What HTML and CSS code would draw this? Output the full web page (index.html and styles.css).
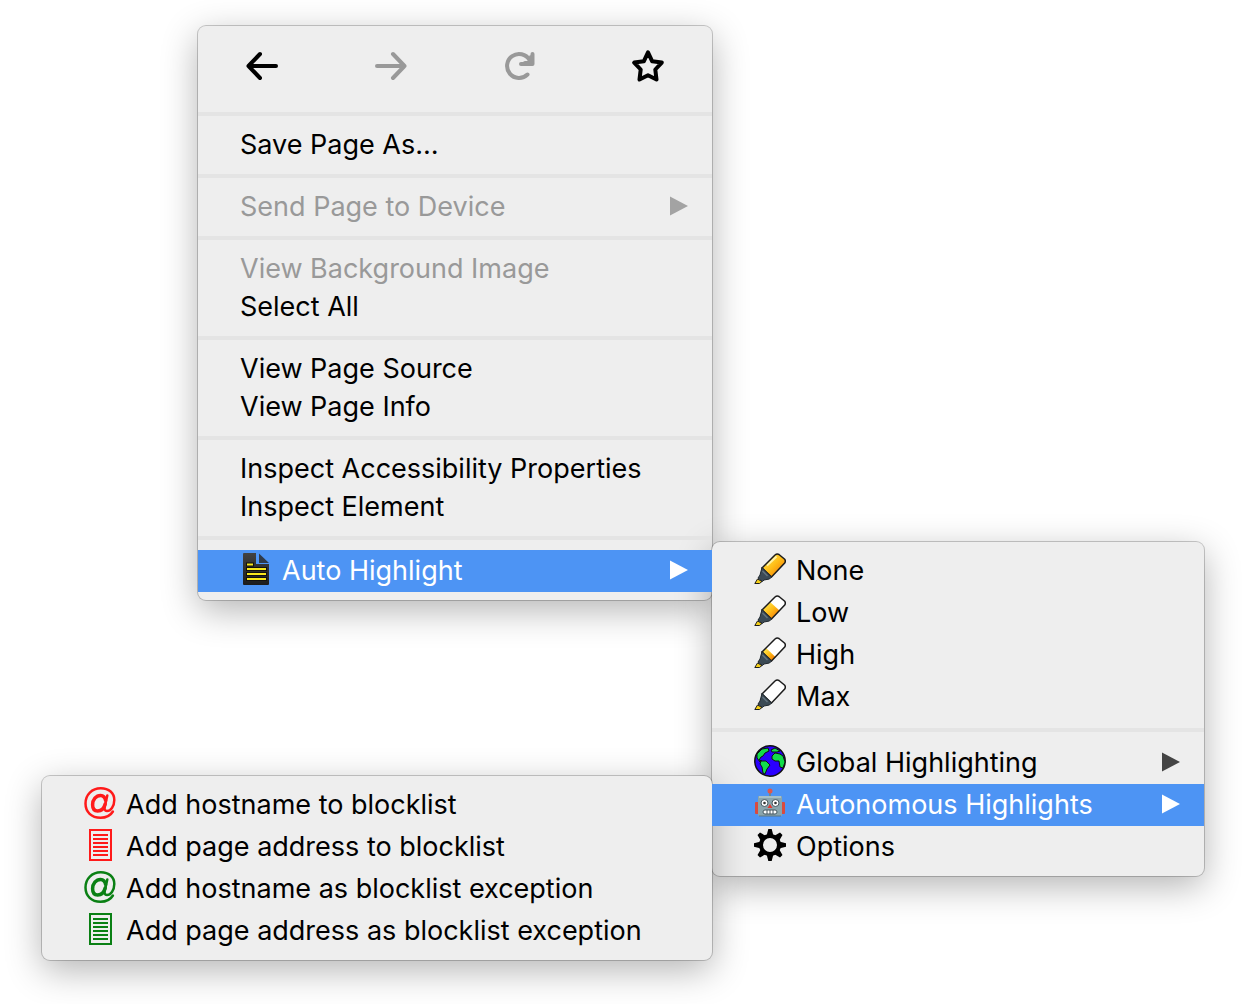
FILE: index.html
```html
<!DOCTYPE html>
<html lang="en">
<head>
  <meta charset="UTF-8">
  <meta name="viewport" content="width=device-width, initial-scale=1.0">
  <title>Auto Highlight</title>
  <link rel="stylesheet" href="styles.css">
</head>
<body>
  <!-- shared icons -->
  <svg class="defs" width="0" height="0" aria-hidden="true">
    <defs>
      <linearGradient id="ink" x1="0" y1="0" x2="1" y2="1">
        <stop offset="0.2" stop-color="#ffdf45"/>
        <stop offset="0.5" stop-color="#ffbd16"/>
        <stop offset="0.8" stop-color="#f58a0b"/>
      </linearGradient>
      <linearGradient id="paper" x1="0" y1="0" x2="0" y2="1">
        <stop offset="0" stop-color="#424242"/>
        <stop offset="1" stop-color="#1c1c1c"/>
      </linearGradient>
      <symbol id="arrow" viewBox="0 0 18 20">
        <path d="M0 0.5 18 10 0 19.5z" fill="currentColor"/>
      </symbol>
      <symbol id="barrel" viewBox="0 0 32 32">
        <path d="M8 15 21 2Q23 0.3 25 1.5L30.7 6.3Q32 8 30.7 10L17.5 24z"/>
      </symbol>
      <symbol id="nib" viewBox="0 0 32 32">
        <path d="M8 15 21 2Q23 0.3 25 1.5L30.7 6.3Q32 8 30.7 10L17.5 24z" fill="none" stroke="#1c1c1c" stroke-width="1.5"/>
        <path d="M8 14.500 17.5 24 15.500 26 10 27 8.500 28.500 4 25 6 22z" fill="#3b4a55" stroke="#20282e"/>
        <path d="M8.500 18 13.500 23" stroke="#63747f" stroke-width="1.5"/>
        <path d="M3.500 26 8 28.500 5.500 30.500H0.8z" fill="#f5d018" stroke="#1c1c1c"/>
      </symbol>
      <symbol id="at" viewBox="0 0 32 32">
        <g fill="none" stroke="currentColor" stroke-linecap="round">
          <path d="M28.9 24.5C26.5 28.5 22 30.7 16.5 30.7 7.5 30.7 1.5 25 1.5 16.5 1.5 7.5 8 1.3 16.8 1.3 25 1.3 30.3 6 30.3 13 30.3 19.5 26.5 24 23 24 20.6 24 20.2 22.2 20.8 19.5L23.3 8.5" stroke-width="2.5"/>
          <path d="M21.6 13.5C21 10 19.2 8.4 16.6 8.4 12 8.4 8.6 12.8 8.6 17.7 8.6 21.6 10.5 23.9 13.7 23.9 17.4 23.9 20.2 20.8 21.2 17" stroke-width="3.5"/>
        </g>
      </symbol>
      <symbol id="page" viewBox="0 0 32 32">
        <path d="M6 1H27V31H6z" fill="none" stroke="currentColor" stroke-width="2"/>
        <path d="M9 6H24M9 10H24M9 14H24M9 18H24M9 22H24M9 26H24" stroke="currentColor" stroke-width="2"/>
      </symbol>
    </defs>
  </svg>

  <nav class="menu main-menu" aria-label="Context menu">
    <div class="toolbar">
      <button type="button" aria-label="Back">
        <svg width="32" height="32" viewBox="0 0 32 32"><path d="M30 16H2.5M14 4 2.5 16 14 28"/></svg>
      </button>
      <button type="button" aria-label="Forward" disabled>
        <svg width="32" height="32" viewBox="0 0 32 32"><path d="M2 16H29.5M18 4 29.5 16 18 28"/></svg>
      </button>
      <button type="button" aria-label="Reload" disabled>
        <svg width="32" height="32" viewBox="0 0 32 32"><path d="M24.5 24.5A12 12 0 1 1 26.5 10"/><path d="M29.5 4V14H18M28 7V13H22"/></svg>
      </button>
      <button type="button" aria-label="Bookmark">
        <svg width="32" height="32" viewBox="0 0 32 32"><path d="M16 2.3 20.2 11.3 29.8 12.6 23.3 19.5 24.5 29.5 16 25.2 7.5 29.5 8.7 19.5 2.2 12.6 11.8 11.3z"/></svg>
      </button>
    </div>
    <ul class="group">
      <li><button type="button" class="item">Save Page As…</button></li>
    </ul>
    <ul class="group">
      <li>
        <button type="button" class="item" disabled>Send Page to Device
          <svg class="more" width="18" height="20"><use href="#arrow"/></svg>
        </button>
      </li>
    </ul>
    <ul class="group">
      <li><button type="button" class="item" disabled>View Background Image</button></li>
      <li><button type="button" class="item">Select All</button></li>
    </ul>
    <ul class="group">
      <li><button type="button" class="item">View Page Source</button></li>
      <li><button type="button" class="item">View Page Info</button></li>
    </ul>
    <ul class="group">
      <li><button type="button" class="item">Inspect Accessibility Properties</button></li>
      <li><button type="button" class="item">Inspect Element</button></li>
    </ul>
    <ul class="group">
      <li class="parent">
        <button type="button" class="item with-icon active" aria-expanded="true">
          <svg class="icon" width="32" height="32" viewBox="0 0 32 32">
            <path d="M4 0H16V11H29V31Q29 32 28 32H4Q3 32 3 31V1Q3 0 4 0z" fill="url(#paper)"/>
            <path d="M19 0.5 29 10H19z" fill="#2f3a49"/>
            <path d="M6 11.5H14M6 16H27M6 21H27M6 26H27" stroke="#111" stroke-width="4"/>
            <path d="M7 11.5H13M7 16H26M7 21H26M7 26H26" stroke="#f7e71c" stroke-width="2.2"/>
          </svg>
          Auto Highlight
          <svg class="more" width="18" height="20"><use href="#arrow"/></svg>
        </button>

        <div class="menu submenu levels">
          <ul class="group">
            <li>
              <button type="button" class="item with-icon">
                <svg class="icon" width="32" height="32" viewBox="0 0 32 32">
                  <use href="#barrel" fill="url(#ink)"/>
                  <path d="M13 12.5 22.5 3.5" stroke="#fff3a8" stroke-width="2"/>
                  <use href="#nib"/>
                </svg>
                None
              </button>
            </li>
            <li>
              <button type="button" class="item with-icon">
                <svg class="icon" width="32" height="32" viewBox="0 0 32 32">
                  <use href="#barrel" fill="#fff"/>
                  <path d="M8 15 16 7 25.5 15.5 17.5 24z" fill="url(#ink)"/>
                  <use href="#nib"/>
                </svg>
                Low
              </button>
            </li>
            <li>
              <button type="button" class="item with-icon">
                <svg class="icon" width="32" height="32" viewBox="0 0 32 32">
                  <use href="#barrel" fill="#fff"/>
                  <path d="M8 15 12 11 21.5 20 17.5 24z" fill="url(#ink)"/>
                  <use href="#nib"/>
                </svg>
                High
              </button>
            </li>
            <li>
              <button type="button" class="item with-icon">
                <svg class="icon" width="32" height="32" viewBox="0 0 32 32">
                  <use href="#barrel" fill="#fff"/>
                  <use href="#nib"/>
                </svg>
                Max
              </button>
            </li>
          </ul>
          <ul class="group">
            <li>
              <button type="button" class="item with-icon">
                <svg class="icon" width="32" height="32" viewBox="0 0 32 32">
                  <circle cx="16" cy="16" r="15.2" fill="#2a00ff" stroke="#111" stroke-width="1.5"/>
                  <g fill="#12dc4a" stroke="#111" stroke-linejoin="round">
                    <path d="M3 9 8 4 14 3 15 6 11 8 9 11 7 12 5 15 8 16 6 17 3 13z"/>
                    <path d="M17 5 21 3 26 6 23 7 18 7z"/>
                    <path d="M18 11 21 8 26 9 29 11 31 17 29 23 26 22 25 16 21 16 18 14z"/>
                    <path d="M7 16 12 16 16 20 13 24 11 29 9 28 8 22 6 19z"/>
                  </g>
                </svg>
                Global Highlighting
                <svg class="more" width="18" height="20"><use href="#arrow"/></svg>
              </button>
            </li>
            <li class="parent">
              <button type="button" class="item with-icon active" aria-expanded="true">
                <svg class="icon" width="32" height="32" viewBox="0 0 32 32">
                  <path d="M16 3V10" stroke="#6f8790" stroke-width="2"/>
                  <circle cx="16" cy="4" r="2.5" fill="#e2564b"/>
                  <rect x="1" y="15" width="4" height="12" rx="1" fill="#d94b3f"/>
                  <rect x="27" y="15" width="4" height="12" rx="1" fill="#d94b3f"/>
                  <rect x="4" y="9" width="24" height="20" rx="1" fill="#8aa5ad"/>
                  <path d="M5 10H27" stroke="#a8c0c6" stroke-width="2"/>
                  <path d="M5 29H27" stroke="#5f7780"/>
                  <circle cx="10.5" cy="16" r="3.5" fill="#fff" stroke="#455760"/>
                  <circle cx="21.5" cy="16" r="3.5" fill="#fff" stroke="#455760"/>
                  <circle cx="10.5" cy="16" r="1.3" fill="#333"/>
                  <circle cx="21.5" cy="16" r="1.3" fill="#333"/>
                  <path d="M16 17 18.5 21H13.5z" fill="#e8382f"/>
                  <rect x="9" y="23" width="14" height="4" rx="2" fill="#fff" stroke="#455760"/>
                  <path d="M13 23V27M16 23V27M19 23V27" stroke="#455760"/>
                </svg>
                Autonomous Highlights
                <svg class="more" width="18" height="20"><use href="#arrow"/></svg>
              </button>

              <div class="menu submenu blocklist">
                <ul class="group">
                  <li>
                    <button type="button" class="item with-icon">
                      <svg class="icon block" width="32" height="32"><use href="#at"/></svg>
                      Add hostname to blocklist
                    </button>
                  </li>
                  <li>
                    <button type="button" class="item with-icon">
                      <svg class="icon block" width="32" height="32"><use href="#page"/></svg>
                      Add page address to blocklist
                    </button>
                  </li>
                  <li>
                    <button type="button" class="item with-icon">
                      <svg class="icon allow" width="32" height="32"><use href="#at"/></svg>
                      Add hostname as blocklist exception
                    </button>
                  </li>
                  <li>
                    <button type="button" class="item with-icon">
                      <svg class="icon allow" width="32" height="32"><use href="#page"/></svg>
                      Add page address as blocklist exception
                    </button>
                  </li>
                </ul>
              </div>
            </li>
            <li>
              <button type="button" class="item with-icon">
                <svg class="icon" width="32" height="32" viewBox="0 0 32 32">
                  <g id="teeth">
                    <path d="M14.3 0H17.7L19.5 7H12.500zM14.300 32H17.700L19.500 25H12.500zM0 14.300V17.700L7 19.500V12.500zM32 14.300V17.700L25 19.500V12.500z"/>
                    <path d="M3.500 6 6 3.500 12 7 7 12zM28.500 6 26 3.500 20 7 25 12zM3.500 26 6 28.500 12 25 7 20zM28.500 26 26 28.500 20 25 25 20z"/>
                  </g>
                  <circle cx="16" cy="16" r="9" fill="none" stroke="#000" stroke-width="4"/>
                </svg>
                Options
              </button>
            </li>
          </ul>
        </div>
      </li>
    </ul>
  </nav>
</body>
</html>
```
FILE: styles.css
```css
* {
  box-sizing: border-box;
}
body {
  margin: 0;
  padding: 26px 0 0 198px;
  min-height: 100vh;
  background: #fff;
  color: #000;
  font-family: Inter, "Open Sans", sans-serif;
}
.defs {
  position: absolute;
}
.menu {
  background: #eee;
  border-radius: 8px;
  box-shadow: 0 0 0 1px rgba(0, 0, 0, 0.2), 0 10px 36px rgba(0, 0, 0, 0.3);
}
.main-menu {
  width: 514px;
  isolation: isolate;
}
.toolbar {
  display: flex;
  padding-bottom: 6px;
}
.toolbar button {
  flex: 1;
  height: 80px;
  padding: 0;
  border: none;
  background: none;
  color: #000;
}
.toolbar button:disabled {
  color: #999;
}
.toolbar svg {
  display: block;
  margin: 0 auto;
  fill: none;
  stroke: currentColor;
  stroke-width: 4;
  stroke-linecap: round;
  stroke-linejoin: round;
}

/* menu rows */
.group {
  list-style: none;
  margin: 0;
  padding: 10px 0;
}
.toolbar + .group,
.group + .group {
  border-top: 4px solid #e4e4e4;
}
.group:last-child {
  padding-bottom: 8px;
}
.submenu .group:first-child {
  padding-top: 8px;
}
.item {
  display: flex;
  align-items: center;
  width: 100%;
  height: 38px;
  padding: 0 24px 0 42px;
  border: none;
  background: none;
  color: #000;
  font: inherit;
  font-size: 27px;
  line-height: 38px;
  text-align: left;
  white-space: nowrap;
}
.item:disabled {
  color: #999;
}
.with-icon {
  height: 42px;
}
.active {
  background: #4d94f4;
  color: #fff;
}
.icon {
  flex: none;
  margin: 0 10px 4px 0;
}
.more {
  flex: none;
  margin: 0 0 3px auto;
  color: #444;
}
.item:disabled .more {
  color: #a3a3a3;
}
.active .more {
  color: #fff;
}
.block {
  color: #ff1a1a;
}
.allow {
  color: #0a8014;
}

/* open submenus, kept under the rows so their shadow stays off the active one */
.parent {
  position: relative;
}
.submenu {
  position: absolute;
  top: -8px;
  z-index: -1;
}
.levels {
  left: 100%;
  width: 492px;
}
.levels > .group:first-child {
  padding-bottom: 10px;
}
.blocklist {
  right: 100%;
  width: 670px;
}
```
